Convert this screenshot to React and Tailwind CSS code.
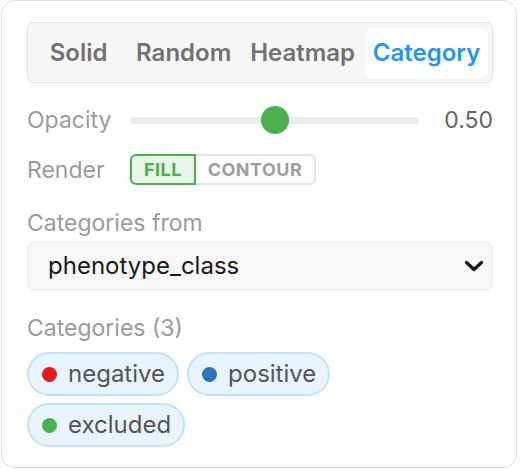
import React from "react";

const font = { fontFamily: "Inter, 'Noto Sans', sans-serif" };

function Chip({ color, label }) {
  return (
    <div className="flex h-[44px] items-center rounded-full border-2 border-[#c3e1fb] bg-[#e8f4fe] pl-[13px] pr-[12px]">
      <span className="h-[15px] w-[15px] rounded-full" style={{ backgroundColor: color }} />
      <span className="ml-[11px] text-[24px] leading-none text-[#555555]">{label}</span>
    </div>
  );
}

export default function App() {
  const tabs = [
    { label: "Solid", w: "w-[94px]" },
    { label: "Random", w: "w-[114px]" },
    { label: "Heatmap", w: "w-[122px]" },
    { label: "Category", w: "w-[124px]", active: true },
  ];
  return (
    <div className="h-[470px] w-[520px] bg-white" style={font}>
      <div className="ml-[1px] flex h-[468px] w-[516px] flex-col rounded-[14px] border border-[#dedede] bg-white pl-[25px] pr-[23px] pt-[21px]">
        {/* segmented tabs */}
        <div className="flex h-[61px] items-center gap-[2px] rounded-[7px] border-[1.5px] border-[#e2e2e2] bg-[#f7f7f7] px-[4px]">
          {tabs.map((t) =>
            t.active ? (
              <div
                key={t.label}
                className={`${t.w} ml-auto flex h-[50px] items-center justify-center rounded-[6px] bg-white text-[24px] font-semibold text-[#2196f3] shadow-[0_0_1px_rgba(0,0,0,0.08)]`}
              >
                {t.label}
              </div>
            ) : (
              <div
                key={t.label}
                className={`${t.w} flex h-[50px] items-center justify-center text-[24px] font-semibold text-[#727272]`}
              >
                {t.label}
              </div>
            )
          )}
        </div>

        {/* opacity */}
        <div className="mt-[23px] flex h-[28px] items-center">
          <div className="w-[103px] shrink-0 text-[23px] leading-none text-[#9b9b9b]">Opacity</div>
          <div className="relative flex h-[28px] flex-1 items-center">
            <div className="h-[7px] w-full rounded-full bg-[#ececec]" />
            <div className="absolute left-1/2 top-0 h-[28px] w-[28px] -translate-x-1/2 rounded-full bg-[#4caf50]" />
          </div>
          <div className="ml-[24px] w-[50px] text-right text-[23px] leading-none text-[#666666]">0.50</div>
        </div>

        {/* render */}
        <div className="mt-[20px] flex h-[31px] items-center">
          <div className="w-[103px] shrink-0 pt-[2px] text-[23px] leading-none text-[#9b9b9b]">Render</div>
          <div className="flex h-[31px]">
            <div className="flex w-[66px] items-center justify-center rounded-l-[6px] border-2 border-[#4caf50] bg-[#e8f5e9] text-[18px] font-bold tracking-[0.5px] text-[#4caf50]">
              FILL
            </div>
            <div className="flex w-[120px] items-center justify-center rounded-r-[6px] border-2 border-l-0 border-[#e2e2e2] bg-white text-[18px] font-bold tracking-[0.5px] text-[#9e9e9e]">
              CONTOUR
            </div>
          </div>
        </div>

        {/* categories from */}
        <div className="mt-[24px] h-[29px] text-[23px] leading-[29px] text-[#9b9b9b]">Categories from</div>
        <div className="mt-[4px] flex h-[48px] items-center justify-between rounded-[7px] border-[1.5px] border-[#ececec] bg-[#f8f8f8] pl-[20px] pr-[8px]">
          <span className="text-[24px] leading-none text-[#1a1a1a]">phenotype_class</span>
          <svg width="20" height="12" viewBox="0 0 20 12">
            <path d="M2.5 2.5 L10 9.5 L17.5 2.5" fill="none" stroke="#1a1a1a" strokeWidth="3.4" strokeLinecap="round" strokeLinejoin="round" />
          </svg>
        </div>

        {/* categories */}
        <div className="mt-[24px] h-[29px] text-[23px] leading-[29px] text-[#9b9b9b]">Categories (3)</div>
        <div className="mt-[9px] flex flex-wrap gap-x-[8px] gap-y-[7px] pr-[150px]">
          <Chip color="#e31a1c" label="negative" />
          <Chip color="#2c72b4" label="positive" />
          <Chip color="#4caf50" label="excluded" />
        </div>
      </div>
    </div>
  );
}
